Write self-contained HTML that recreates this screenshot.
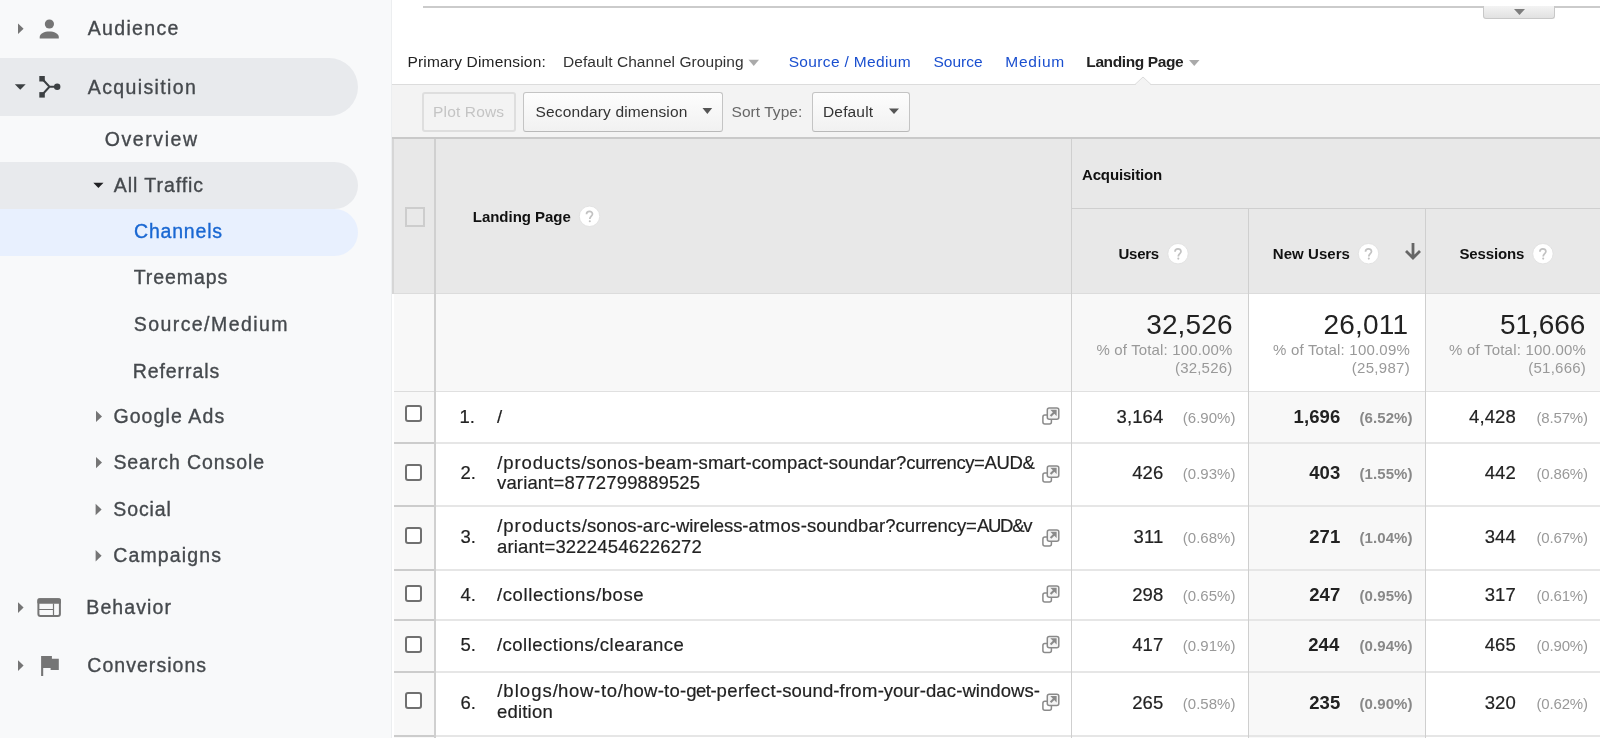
<!DOCTYPE html>
<html>
<head>
<meta charset="utf-8">
<title>Channels - Landing Page</title>
<style>
html, body { margin: 0; padding: 0; }
body { width: 1600px; height: 738px; overflow: hidden; position: relative; background: #fff; font-family: "Liberation Sans", sans-serif; }
.t { position: absolute; white-space: nowrap; line-height: 1; }
#texts { position: absolute; left: 0; top: 0; width: 1600px; height: 738px; will-change: transform; }
.b { position: absolute; }
#sidebar { position: absolute; left: 0; top: 0; width: 391px; height: 738px; background: #f8f9fa; border-right: 1px solid #eceef0; }
.pill { position: absolute; left: 0; width: 358px; }
#main { position: absolute; left: 392px; top: 0; width: 1208px; height: 738px; background: #fff; }
svg { position: absolute; left: 0; top: 0; overflow: visible; }
.btn { position: absolute; box-sizing: border-box; border-radius: 3px; }
.cb { position: absolute; left: 405px; width: 17px; height: 17px; box-sizing: border-box; border: 2px solid #707070; border-radius: 3px; background: #fff; }
</style>
</head>
<body>
<div id="sidebar">
  <div class="pill" style="top:58px;height:58px;background:#e8eaed;border-radius:0 29px 29px 0"></div>
  <div class="pill" style="top:162px;height:47px;background:#e8eaed;border-radius:0 23.5px 23.5px 0"></div>
  <div class="pill" style="top:209px;height:47px;background:#e8f0fe;border-radius:0 23.5px 23.5px 0"></div>
  <svg width="392" height="738" viewBox="0 0 392 738">
    <!-- arrows -->
    <path d="M18 23.5 L23.6 28.8 L18 34.1 Z" fill="#757575"/>
    <path d="M14.8 84.3 L25.7 84.3 L20.25 89.8 Z" fill="#3c4043"/>
    <path d="M93.3 182.8 L103.5 182.8 L98.4 187.9 Z" fill="#202124"/>
    <path d="M96 410.8 L102 416.4 L96 422 Z" fill="#757575"/>
    <path d="M96 457 L102 462.6 L96 468.2 Z" fill="#757575"/>
    <path d="M95.6 503.8 L101.6 509.5 L95.6 515.2 Z" fill="#757575"/>
    <path d="M95.6 550 L101.6 555.7 L95.6 561.4 Z" fill="#757575"/>
    <path d="M18 602.2 L23.6 607.6 L18 613 Z" fill="#757575"/>
    <path d="M18 660.2 L23.6 665.6 L18 671 Z" fill="#757575"/>
    <!-- person icon -->
    <circle cx="49.4" cy="24" r="4.6" fill="#757575"/>
    <path d="M39.7 38.5 L39.7 37 C39.7 33.4 44.5 31.4 49.25 31.4 C54 31.4 58.8 33.4 58.8 37 L58.8 38.5 Z" fill="#757575"/>
    <!-- acquisition icon -->
    <rect x="39.3" y="76" width="5.5" height="5.5" fill="#3c4043"/>
    <rect x="39.3" y="92.1" width="5.5" height="5.5" fill="#3c4043"/>
    <path d="M43.5 80.3 L49.5 86.8 L43.5 93.3 M49.2 86.8 L56 86.8" stroke="#3c4043" stroke-width="2" fill="none"/>
    <circle cx="57.2" cy="86.8" r="3.2" fill="#3c4043"/>
    <!-- behavior icon -->
    <rect x="38.4" y="599.3" width="21.5" height="16.7" rx="2" fill="none" stroke="#757575" stroke-width="2"/>
    <rect x="37.4" y="598.3" width="23.5" height="5.5" rx="1.5" fill="#757575"/>
    <path d="M38.5 609.5 H53.5 M53.5 603.5 V616" stroke="#757575" stroke-width="1.2" fill="none"/>
    <!-- flag icon -->
    <path d="M41.1 656 H51.9 V658.8 H58.8 V669.9 H50.6 V668 H43.2 V676.1 H41.1 Z" fill="#757575"/>
  </svg>
</div>

<div id="main">
  <!-- top rule with tab -->
  <div class="b" style="left:31px;top:6px;width:1177px;height:2px;background:#cbcbcb"></div>
  <div class="b" style="left:1091px;top:6px;width:72px;height:13px;box-sizing:border-box;border:1px solid #c8c8c8;border-top:none;border-radius:0 0 3px 3px;background:linear-gradient(#f3f3f3,#e1e1e1)"></div>
</div>

<svg width="1600" height="738" viewBox="0 0 1600 738">
  <path d="M1514 9 H1525 L1519.5 15 Z" fill="#7d7d7d"/>
  <!-- primary dim arrows -->
  <path d="M748.5 59.8 H759 L753.75 66 Z" fill="#aaa"/>
  <path d="M1189 60 H1199.5 L1194.25 66 Z" fill="#aaa"/>
</svg>

<!-- toolbar -->
<div class="b" style="left:392px;top:84px;width:1208px;height:53px;background:#f3f3f3;border-top:1px solid #dcdcdc"></div>
<div class="b" style="left:392px;top:137px;width:1208px;height:2px;background:#c9c9c9"></div>
<svg width="1600" height="738" viewBox="0 0 1600 738">
  <path d="M1135 84.5 L1143 77 L1151 84.5" fill="#f3f3f3" stroke="#dcdcdc" stroke-width="1"/>
  <rect x="1136" y="84" width="14" height="2" fill="#f3f3f3"/>
</svg>
<div class="btn" style="left:421.5px;top:92px;width:94px;height:40px;border:2px solid #dedede;background:#f3f3f3"></div>
<div class="btn" style="left:523px;top:92px;width:200px;height:40px;border:1px solid #c4c4c4;border-bottom-color:#b9b9b9;background:linear-gradient(#fdfdfd,#f1f1f1)"></div>
<div class="btn" style="left:812px;top:92px;width:98px;height:40px;border:1px solid #c4c4c4;border-bottom-color:#b9b9b9;background:linear-gradient(#fdfdfd,#f1f1f1)"></div>
<svg width="1600" height="738" viewBox="0 0 1600 738">
  <path d="M702.5 108 H712.2 L707.35 114 Z" fill="#555"/>
  <path d="M889 108.4 H899 L894 114 Z" fill="#555"/>
</svg>

<!-- table -->
<div class="b" style="left:393px;top:139px;width:1207px;height:599px;background:#fff"></div>
<!-- header bg -->
<div class="b" style="left:393px;top:139px;width:1207px;height:154px;background:#e8e8e8"></div>
<div class="b" style="left:393px;top:293px;width:1207px;height:1px;background:#dcdcdc"></div>
<!-- totals bg -->
<div class="b" style="left:393px;top:294px;width:856px;height:97px;background:#f8f8f8"></div>
<div class="b" style="left:1426px;top:294px;width:174px;height:97px;background:#f8f8f8"></div>
<!-- checkbox col & new users col bg in rows -->
<div class="b" style="left:393px;top:391px;width:42px;height:347px;background:#f8f8f8"></div>
<div class="b" style="left:1249px;top:391px;width:176px;height:347px;background:#f8f8f8"></div>
<!-- row borders -->
<div class="b" style="left:393px;top:391px;width:1207px;height:1px;background:#e0e0e0"></div>
<div class="b" style="left:393px;top:442px;width:1207px;height:2px;background:#e6e6e6"></div>
<div class="b" style="left:393px;top:505px;width:1207px;height:2px;background:#e6e6e6"></div>
<div class="b" style="left:393px;top:569px;width:1207px;height:2px;background:#e6e6e6"></div>
<div class="b" style="left:393px;top:619px;width:1207px;height:2px;background:#e6e6e6"></div>
<div class="b" style="left:393px;top:671px;width:1207px;height:2px;background:#e6e6e6"></div>
<div class="b" style="left:393px;top:735px;width:1207px;height:2px;background:#e6e6e6"></div>
<!-- darker borders in checkbox col -->
<div class="b" style="left:394px;top:391px;width:40px;height:1px;background:#dcdcdc"></div>
<div class="b" style="left:394px;top:442px;width:40px;height:2px;background:#cccccc"></div>
<div class="b" style="left:394px;top:505px;width:40px;height:2px;background:#cccccc"></div>
<div class="b" style="left:394px;top:569px;width:40px;height:2px;background:#cccccc"></div>
<div class="b" style="left:394px;top:619px;width:40px;height:2px;background:#cccccc"></div>
<div class="b" style="left:394px;top:671px;width:40px;height:2px;background:#cccccc"></div>
<div class="b" style="left:394px;top:735px;width:40px;height:2px;background:#cccccc"></div>
<!-- vertical dividers -->
<div class="b" style="left:392px;top:139px;width:2px;height:155px;background:#d6d6d6"></div>
<div class="b" style="left:392px;top:294px;width:2px;height:444px;background:#fff"></div>
<div class="b" style="left:434px;top:139px;width:2px;height:599px;background:#d0d0d0"></div>
<div class="b" style="left:1071px;top:139px;width:1px;height:599px;background:#cfcfcf"></div>
<div class="b" style="left:1072px;top:208px;width:528px;height:1px;background:#cfcfcf"></div>
<div class="b" style="left:1248px;top:209px;width:1px;height:529px;background:#cfcfcf"></div>
<div class="b" style="left:1425px;top:209px;width:1px;height:529px;background:#cfcfcf"></div>

<!-- header checkbox -->
<div class="b" style="left:405px;top:207px;width:19.5px;height:19.5px;box-sizing:border-box;border:2px solid #cdcdcd;background:#e9e9e9"></div>
<!-- help icons -->
<svg width="1600" height="738" viewBox="0 0 1600 738">
  <defs>
    <g id="help">
      <circle cx="0" cy="0" r="10.2" fill="#fff" stroke="#dedede" stroke-width="0.8"/>
      <path d="M-3 -2 C-3 -3.9 -1.7 -4.9 0 -4.9 C1.7 -4.9 3 -3.9 3 -2.3 C3 -0.3 0.3 0.2 0.3 2.7" fill="none" stroke="#c2c2c2" stroke-width="1.7"/>
      <circle cx="0.3" cy="4.9" r="1.05" fill="#c2c2c2"/>
    </g>
  </defs>
  <use href="#help" x="589.5" y="216.3"/>
  <use href="#help" x="1178" y="253.7"/>
  <use href="#help" x="1368.5" y="253.7"/>
  <use href="#help" x="1542.9" y="253.7"/>
</svg>
<!-- sort arrow -->
<svg width="1600" height="738" viewBox="0 0 1600 738">
  <path d="M1413 243 V257 M1406 251 L1413 258 L1420 251" stroke="#666" stroke-width="2.8" fill="none"/>
</svg>

<!-- row checkboxes -->
<div class="cb" style="top:405px"></div>
<div class="cb" style="top:463.5px"></div>
<div class="cb" style="top:527px"></div>
<div class="cb" style="top:585px"></div>
<div class="cb" style="top:636px"></div>
<div class="cb" style="top:692px"></div>

<!-- external link icons -->
<svg width="1600" height="738" viewBox="0 0 1600 738">
  <g id="ext" fill="none" stroke="#8a8a8a" stroke-width="1.5">
    <rect x="1042.9" y="414.9" width="8.5" height="9" rx="2"/>
    <rect x="1047.3" y="407.9" width="11.5" height="11.3" rx="2" fill="#f4f4f4"/>
    <path d="M1050.6 416 L1054.6 412" stroke-width="2"/><path d="M1050.3 409.8 H1056.6 V416.1 Z" fill="#8a8a8a" stroke="none"/>
  </g>
  <use href="#ext" y="58"/>
  <use href="#ext" y="122"/>
  <use href="#ext" y="178"/>
  <use href="#ext" y="228.5"/>
  <use href="#ext" y="286.3"/>
</svg>

<div id="texts">
<div class="t" style="left:87.80px;top:19.00px;font-size:19.5px;color:#45494d;-webkit-text-stroke:0.35px #45494d;letter-spacing:1.319px">Audience</div>
<div class="t" style="left:87.80px;top:77.50px;font-size:19.5px;color:#45494d;-webkit-text-stroke:0.35px #45494d;letter-spacing:1.374px">Acquisition</div>
<div class="t" style="left:104.70px;top:130.20px;font-size:19.5px;color:#45494d;-webkit-text-stroke:0.35px #45494d;letter-spacing:1.588px">Overview</div>
<div class="t" style="left:113.80px;top:175.70px;font-size:19.5px;color:#45494d;-webkit-text-stroke:0.35px #45494d;letter-spacing:0.947px">All Traffic</div>
<div class="t" style="left:134.00px;top:222.00px;font-size:19.5px;color:#1967d2;-webkit-text-stroke:0.35px #1967d2;letter-spacing:0.809px">Channels</div>
<div class="t" style="left:133.70px;top:268.40px;font-size:19.5px;color:#45494d;-webkit-text-stroke:0.35px #45494d;letter-spacing:0.928px">Treemaps</div>
<div class="t" style="left:133.70px;top:314.90px;font-size:19.5px;color:#45494d;-webkit-text-stroke:0.35px #45494d;letter-spacing:1.441px">Source/Medium</div>
<div class="t" style="left:132.70px;top:361.70px;font-size:19.5px;color:#45494d;-webkit-text-stroke:0.35px #45494d;letter-spacing:0.931px">Referrals</div>
<div class="t" style="left:113.40px;top:406.80px;font-size:19.5px;color:#45494d;-webkit-text-stroke:0.35px #45494d;letter-spacing:1.106px">Google Ads</div>
<div class="t" style="left:113.40px;top:452.60px;font-size:19.5px;color:#45494d;-webkit-text-stroke:0.35px #45494d;letter-spacing:0.923px">Search Console</div>
<div class="t" style="left:113.30px;top:499.80px;font-size:19.5px;color:#45494d;-webkit-text-stroke:0.35px #45494d;letter-spacing:0.884px">Social</div>
<div class="t" style="left:113.30px;top:546.00px;font-size:19.5px;color:#45494d;-webkit-text-stroke:0.35px #45494d;letter-spacing:1.127px">Campaigns</div>
<div class="t" style="left:86.30px;top:598.10px;font-size:19.5px;color:#45494d;-webkit-text-stroke:0.35px #45494d;letter-spacing:1.090px">Behavior</div>
<div class="t" style="left:87.30px;top:656.20px;font-size:19.5px;color:#45494d;-webkit-text-stroke:0.35px #45494d;letter-spacing:1.037px">Conversions</div>
<div class="t" style="left:407.40px;top:54.30px;font-size:15.5px;color:#222;letter-spacing:0.187px">Primary Dimension:</div>
<div class="t" style="left:563.00px;top:54.30px;font-size:15.5px;color:#333;letter-spacing:0.061px">Default Channel Grouping</div>
<div class="t" style="left:788.70px;top:54.30px;font-size:15.5px;color:#1a4fcf;letter-spacing:0.347px">Source / Medium</div>
<div class="t" style="left:933.40px;top:54.30px;font-size:15.5px;color:#1a4fcf;letter-spacing:0.022px">Source</div>
<div class="t" style="left:1005.30px;top:54.30px;font-size:15.5px;color:#1a4fcf;letter-spacing:0.757px">Medium</div>
<div class="t" style="left:1086.30px;top:54.30px;font-size:15.5px;color:#222;font-weight:700;letter-spacing:-0.382px">Landing Page</div>
<div class="t" style="left:433.10px;top:104.00px;font-size:15.5px;color:#c4c4c4;letter-spacing:0.147px">Plot Rows</div>
<div class="t" style="left:535.50px;top:103.70px;font-size:15.5px;color:#333;letter-spacing:0.153px">Secondary dimension</div>
<div class="t" style="left:731.50px;top:103.70px;font-size:15.5px;color:#666;letter-spacing:0.046px">Sort Type:</div>
<div class="t" style="left:823.00px;top:103.70px;font-size:15.5px;color:#333;letter-spacing:0.158px">Default</div>
<div class="t" style="left:472.75px;top:209.20px;font-size:15px;color:#111;font-weight:700;letter-spacing:-0.023px">Landing Page</div>
<div class="t" style="left:1082.00px;top:166.60px;font-size:15px;color:#111;font-weight:700;letter-spacing:-0.150px">Acquisition</div>
<div class="t" style="left:1118.60px;top:246.00px;font-size:15px;color:#111;font-weight:700;letter-spacing:-0.314px">Users</div>
<div class="t" style="left:1272.75px;top:246.00px;font-size:15px;color:#111;font-weight:700;letter-spacing:0.061px">New Users</div>
<div class="t" style="left:1459.40px;top:246.00px;font-size:15px;color:#111;font-weight:700;letter-spacing:-0.132px">Sessions</div>
<div class="t" style="left:1146.20px;top:311.20px;font-size:28px;color:#222;letter-spacing:0.146px">32,526</div>
<div class="t" style="left:1096.50px;top:342.10px;font-size:15px;color:#999;letter-spacing:0.146px">% of Total: 100.00%</div>
<div class="t" style="left:1175.00px;top:359.60px;font-size:15px;color:#999;letter-spacing:0.189px">(32,526)</div>
<div class="t" style="left:1323.40px;top:311.20px;font-size:28px;color:#222;letter-spacing:0.222px">26,011</div>
<div class="t" style="left:1273.00px;top:342.10px;font-size:15px;color:#999;letter-spacing:0.201px">% of Total: 100.09%</div>
<div class="t" style="left:1351.70px;top:359.60px;font-size:15px;color:#999;letter-spacing:0.304px">(25,987)</div>
<div class="t" style="left:1500.00px;top:311.20px;font-size:28px;color:#222;letter-spacing:-0.074px">51,666</div>
<div class="t" style="left:1449.00px;top:342.10px;font-size:15px;color:#999;letter-spacing:0.207px">% of Total: 100.00%</div>
<div class="t" style="left:1528.30px;top:359.60px;font-size:15px;color:#999;letter-spacing:0.232px">(51,666)</div>
<div class="t" style="left:459.50px;top:408.00px;font-size:18.5px;color:#222;-webkit-text-stroke:0.2px #222">1.</div>
<div class="t" style="left:497.00px;top:408.00px;font-size:18.5px;color:#222;-webkit-text-stroke:0.2px #222;letter-spacing:0.450px">/</div>
<div class="t" style="left:1116.59px;top:408.00px;font-size:18.5px;color:#222;-webkit-text-stroke:0.2px #222;letter-spacing:0.100px">3,164</div>
<div class="t" style="left:1182.80px;top:410.00px;font-size:15px;color:#999;letter-spacing:0.012px">(6.90%)</div>
<div class="t" style="left:1293.59px;top:408.00px;font-size:18.5px;color:#222;font-weight:700;letter-spacing:0.100px">1,696</div>
<div class="t" style="left:1359.50px;top:410.00px;font-size:15px;color:#888;font-weight:700;letter-spacing:0.079px">(6.52%)</div>
<div class="t" style="left:1469.09px;top:408.00px;font-size:18.5px;color:#222;-webkit-text-stroke:0.2px #222;letter-spacing:0.100px">4,428</div>
<div class="t" style="left:1536.50px;top:410.00px;font-size:15px;color:#999;letter-spacing:-0.171px">(8.57%)</div>
<div class="t" style="left:460.50px;top:464.00px;font-size:18.5px;color:#222;-webkit-text-stroke:0.2px #222">2.</div>
<div class="t" style="left:497.00px;top:474.40px;font-size:18.5px;color:#222;-webkit-text-stroke:0.2px #222;letter-spacing:0.150px">variant=8772799889525</div>
<div class="t" style="left:1132.22px;top:464.00px;font-size:18.5px;color:#222;-webkit-text-stroke:0.2px #222;letter-spacing:0.100px">426</div>
<div class="t" style="left:1182.80px;top:466.00px;font-size:15px;color:#999;letter-spacing:0.012px">(0.93%)</div>
<div class="t" style="left:1309.22px;top:464.00px;font-size:18.5px;color:#222;font-weight:700;letter-spacing:0.100px">403</div>
<div class="t" style="left:1359.50px;top:466.00px;font-size:15px;color:#888;font-weight:700;letter-spacing:0.079px">(1.55%)</div>
<div class="t" style="left:1484.72px;top:464.00px;font-size:18.5px;color:#222;-webkit-text-stroke:0.2px #222;letter-spacing:0.100px">442</div>
<div class="t" style="left:1536.50px;top:466.00px;font-size:15px;color:#999;letter-spacing:-0.171px">(0.86%)</div>
<div class="t" style="left:460.50px;top:527.80px;font-size:18.5px;color:#222;-webkit-text-stroke:0.2px #222">3.</div>
<div class="t" style="left:497.00px;top:537.50px;font-size:18.5px;color:#222;-webkit-text-stroke:0.2px #222;letter-spacing:0.188px">ariant=32224546226272</div>
<div class="t" style="left:1133.60px;top:527.80px;font-size:18.5px;color:#222;-webkit-text-stroke:0.2px #222;letter-spacing:0.100px">311</div>
<div class="t" style="left:1182.80px;top:529.80px;font-size:15px;color:#999;letter-spacing:0.012px">(0.68%)</div>
<div class="t" style="left:1309.22px;top:527.80px;font-size:18.5px;color:#222;font-weight:700;letter-spacing:0.100px">271</div>
<div class="t" style="left:1359.50px;top:529.80px;font-size:15px;color:#888;font-weight:700;letter-spacing:0.079px">(1.04%)</div>
<div class="t" style="left:1484.72px;top:527.80px;font-size:18.5px;color:#222;-webkit-text-stroke:0.2px #222;letter-spacing:0.100px">344</div>
<div class="t" style="left:1536.50px;top:529.80px;font-size:15px;color:#999;letter-spacing:-0.171px">(0.67%)</div>
<div class="t" style="left:460.50px;top:586.00px;font-size:18.5px;color:#222;-webkit-text-stroke:0.2px #222">4.</div>
<div class="t" style="left:497.00px;top:586.00px;font-size:18.5px;color:#222;-webkit-text-stroke:0.2px #222;letter-spacing:0.614px">/collections/bose</div>
<div class="t" style="left:1132.22px;top:586.00px;font-size:18.5px;color:#222;-webkit-text-stroke:0.2px #222;letter-spacing:0.100px">298</div>
<div class="t" style="left:1182.80px;top:588.00px;font-size:15px;color:#999;letter-spacing:0.012px">(0.65%)</div>
<div class="t" style="left:1309.22px;top:586.00px;font-size:18.5px;color:#222;font-weight:700;letter-spacing:0.100px">247</div>
<div class="t" style="left:1359.50px;top:588.00px;font-size:15px;color:#888;font-weight:700;letter-spacing:0.079px">(0.95%)</div>
<div class="t" style="left:1484.72px;top:586.00px;font-size:18.5px;color:#222;-webkit-text-stroke:0.2px #222;letter-spacing:0.100px">317</div>
<div class="t" style="left:1536.50px;top:588.00px;font-size:15px;color:#999;letter-spacing:-0.171px">(0.61%)</div>
<div class="t" style="left:460.50px;top:636.20px;font-size:18.5px;color:#222;-webkit-text-stroke:0.2px #222">5.</div>
<div class="t" style="left:497.00px;top:636.20px;font-size:18.5px;color:#222;-webkit-text-stroke:0.2px #222;letter-spacing:0.477px">/collections/clearance</div>
<div class="t" style="left:1132.22px;top:636.20px;font-size:18.5px;color:#222;-webkit-text-stroke:0.2px #222;letter-spacing:0.100px">417</div>
<div class="t" style="left:1182.80px;top:638.20px;font-size:15px;color:#999;letter-spacing:0.012px">(0.91%)</div>
<div class="t" style="left:1308.22px;top:636.20px;font-size:18.5px;color:#222;font-weight:700;letter-spacing:0.100px">244</div>
<div class="t" style="left:1359.50px;top:638.20px;font-size:15px;color:#888;font-weight:700;letter-spacing:0.079px">(0.94%)</div>
<div class="t" style="left:1484.72px;top:636.20px;font-size:18.5px;color:#222;-webkit-text-stroke:0.2px #222;letter-spacing:0.100px">465</div>
<div class="t" style="left:1536.50px;top:638.20px;font-size:15px;color:#999;letter-spacing:-0.171px">(0.90%)</div>
<div class="t" style="left:460.50px;top:693.60px;font-size:18.5px;color:#222;-webkit-text-stroke:0.2px #222">6.</div>
<div class="t" style="left:497.00px;top:703.00px;font-size:18.5px;color:#222;-webkit-text-stroke:0.2px #222;letter-spacing:0.196px">edition</div>
<div class="t" style="left:1132.22px;top:693.60px;font-size:18.5px;color:#222;-webkit-text-stroke:0.2px #222;letter-spacing:0.100px">265</div>
<div class="t" style="left:1182.80px;top:695.60px;font-size:15px;color:#999;letter-spacing:0.012px">(0.58%)</div>
<div class="t" style="left:1309.22px;top:693.60px;font-size:18.5px;color:#222;font-weight:700;letter-spacing:0.100px">235</div>
<div class="t" style="left:1359.50px;top:695.60px;font-size:15px;color:#888;font-weight:700;letter-spacing:0.079px">(0.90%)</div>
<div class="t" style="left:1484.72px;top:693.60px;font-size:18.5px;color:#222;-webkit-text-stroke:0.2px #222;letter-spacing:0.100px">320</div>
<div class="t" style="left:1536.50px;top:695.60px;font-size:15px;color:#999;letter-spacing:-0.171px">(0.62%)</div>
<div class="t" style="left:497.20px;top:453.80px;font-size:18.5px;color:#222;-webkit-text-stroke:0.2px #222;letter-spacing:0.896px">/products/</div>
<div class="t" style="left:586.50px;top:453.80px;font-size:18.5px;color:#222;-webkit-text-stroke:0.2px #222;letter-spacing:0.404px">sonos-beam-</div>
<div class="t" style="left:698.50px;top:453.80px;font-size:18.5px;color:#222;-webkit-text-stroke:0.2px #222;letter-spacing:0.136px">smart-compact-</div>
<div class="t" style="left:828.75px;top:453.80px;font-size:18.5px;color:#222;-webkit-text-stroke:0.2px #222;letter-spacing:0.058px">soundar?</div>
<div class="t" style="left:906.30px;top:453.80px;font-size:18.5px;color:#222;-webkit-text-stroke:0.2px #222;letter-spacing:-0.392px">currency=AUD&amp;</div>
<div class="t" style="left:497.20px;top:517.20px;font-size:18.5px;color:#222;-webkit-text-stroke:0.2px #222;letter-spacing:0.952px">/products/</div>
<div class="t" style="left:587.00px;top:517.20px;font-size:18.5px;color:#222;-webkit-text-stroke:0.2px #222;letter-spacing:0.055px">sonos-</div>
<div class="t" style="left:642.80px;top:517.20px;font-size:18.5px;color:#222;-webkit-text-stroke:0.2px #222;letter-spacing:0.447px">arc-</div>
<div class="t" style="left:676.00px;top:517.20px;font-size:18.5px;color:#222;-webkit-text-stroke:0.2px #222;letter-spacing:-0.060px">wireless-</div>
<div class="t" style="left:748.50px;top:517.20px;font-size:18.5px;color:#222;-webkit-text-stroke:0.2px #222;letter-spacing:0.372px">atmos-</div>
<div class="t" style="left:806.90px;top:517.20px;font-size:18.5px;color:#222;-webkit-text-stroke:0.2px #222;letter-spacing:0.146px">soundbar?</div>
<div class="t" style="left:895.50px;top:517.20px;font-size:18.5px;color:#222;-webkit-text-stroke:0.2px #222;letter-spacing:-0.043px">currency=</div>
<div class="t" style="left:976.90px;top:517.20px;font-size:18.5px;color:#222;-webkit-text-stroke:0.2px #222;letter-spacing:-1.250px">AUD&amp;v</div>
<div class="t" style="left:497.20px;top:682.00px;font-size:18.5px;color:#222;-webkit-text-stroke:0.2px #222;letter-spacing:1.032px">/blogs/</div>
<div class="t" style="left:557.90px;top:682.00px;font-size:18.5px;color:#222;-webkit-text-stroke:0.2px #222;letter-spacing:0.722px">how-to/</div>
<div class="t" style="left:622.90px;top:682.00px;font-size:18.5px;color:#222;-webkit-text-stroke:0.2px #222;letter-spacing:0.269px">how-to-</div>
<div class="t" style="left:686.20px;top:682.00px;font-size:18.5px;color:#222;-webkit-text-stroke:0.2px #222;letter-spacing:-0.493px">get-</div>
<div class="t" style="left:716.60px;top:682.00px;font-size:18.5px;color:#222;-webkit-text-stroke:0.2px #222;letter-spacing:0.412px">perfect-</div>
<div class="t" style="left:782.20px;top:682.00px;font-size:18.5px;color:#222;-webkit-text-stroke:0.2px #222;letter-spacing:0.147px">sound-</div>
<div class="t" style="left:839.50px;top:682.00px;font-size:18.5px;color:#222;-webkit-text-stroke:0.2px #222;letter-spacing:0.285px">from-</div>
<div class="t" style="left:883.80px;top:682.00px;font-size:18.5px;color:#222;-webkit-text-stroke:0.2px #222;letter-spacing:-0.012px">your-</div>
<div class="t" style="left:925.90px;top:682.00px;font-size:18.5px;color:#222;-webkit-text-stroke:0.2px #222;letter-spacing:0.171px">dac-</div>
<div class="t" style="left:962.40px;top:682.00px;font-size:18.5px;color:#222;-webkit-text-stroke:0.2px #222;letter-spacing:0.065px">windows-</div>
</div>
</body>
</html>
